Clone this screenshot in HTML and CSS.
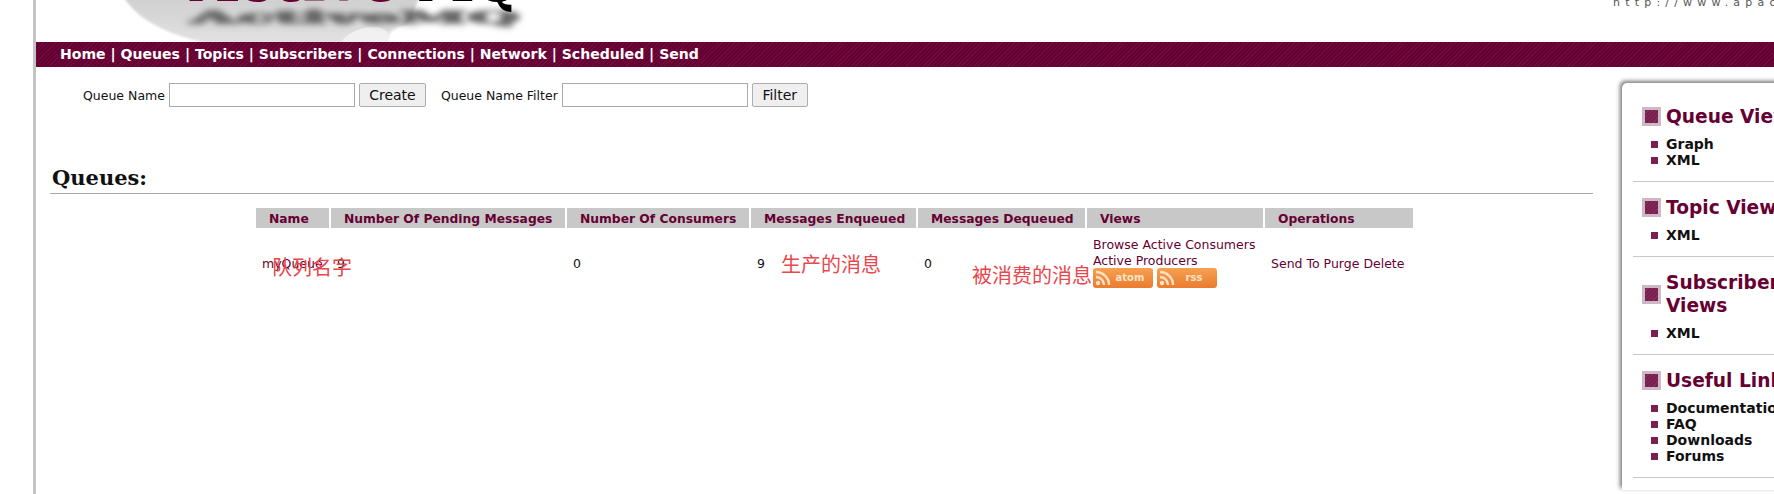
FILE: index.html
```html
<!DOCTYPE html>
<html lang="en">
<head>
    <meta charset="UTF-8">
    <title>localhost : Queues</title>
    <link rel="stylesheet" href="styles.css">
</head>
<body>
    <div class="page">
        <header class="banner">
            <svg class="logo" width="520" height="42" viewBox="0 0 520 42">
                <defs>
                    <filter id="soft" x="-5%" y="-80%" width="110%" height="260%"><feGaussianBlur stdDeviation="3"/></filter>
                    <filter id="softer"><feGaussianBlur stdDeviation="0.8"/></filter>
                    <linearGradient id="swoosh" x1="0" y1="0" x2="0" y2="1">
                        <stop offset="0" stop-color="#cfcfcf"/>
                        <stop offset="1" stop-color="#e2e2e2"/>
                    </linearGradient>
                </defs>
                <path d="M87 -4 C 100 18 128 34 171 43 L 352 43 C 350 34 356 28 372 24 L 384 -4 Z" fill="url(#swoosh)" filter="url(#softer)"/>
                <path d="M306 42 C 308 34 326 26 340 27 C 354 29 356 38 350 42 Z" fill="#f1f1f1"/>
                <text class="logo-shadow" x="154" y="23" textLength="330" lengthAdjust="spacingAndGlyphs" filter="url(#soft)">ActiveMQ</text>
                <text class="logo-text" x="154" y="1" textLength="210" lengthAdjust="spacingAndGlyphs">Active</text>
                <text class="logo-text logo-dark" x="381" y="1" textLength="103" lengthAdjust="spacingAndGlyphs">MQ</text>
            </svg>
            <span class="site-url">http://www.apache.org/</span>
        </header>

        <nav class="topnav">
            <a href="#">Home</a> | <a href="#">Queues</a> | <a href="#">Topics</a> | <a href="#">Subscribers</a> | <a href="#">Connections</a> | <a href="#">Network</a> | <a href="#">Scheduled</a> | <a href="#">Send</a>
        </nav>

        <div class="columns">
            <main class="content">
                <form class="queue-form">
                    <label for="queueName">Queue Name</label>
                    <input type="text" id="queueName">
                    <button type="button" class="btn btn-create">Create</button>
                    <label for="queueFilter" class="filter-label">Queue Name Filter</label>
                    <input type="text" id="queueFilter">
                    <button type="button" class="btn btn-filter">Filter</button>
                </form>

                <h2 class="section-heading">Queues:</h2>

                <table class="queues">
                    <thead>
                        <tr>
                            <th class="col-name">Name</th>
                            <th class="col-pending">Number Of Pending Messages</th>
                            <th class="col-consumers">Number Of Consumers</th>
                            <th class="col-enqueued">Messages Enqueued</th>
                            <th class="col-dequeued">Messages Dequeued</th>
                            <th class="col-views">Views</th>
                            <th class="col-ops">Operations</th>
                        </tr>
                    </thead>
                    <tbody>
                        <tr>
                            <td><a href="#">myQueue</a></td>
                            <td>9</td>
                            <td>0</td>
                            <td>9</td>
                            <td>0</td>
                            <td class="views-cell">
                                <a href="#">Browse</a> <a href="#">Active Consumers</a><br>
                                <a href="#">Active Producers</a><br>
                                <span class="feeds">
                                    <a href="#" class="feed">
                                        <svg width="16" height="16" viewBox="0 0 16 16"><circle cx="3" cy="13" r="2.2" fill="#fde3c4"/><path d="M1 7 A8 8 0 0 1 9 15 M1 2 A13 13 0 0 1 14 15" fill="none" stroke="#fde3c4" stroke-width="2.4"/></svg>
                                        <span class="feed-label">atom</span>
                                    </a>
                                    <a href="#" class="feed">
                                        <svg width="16" height="16" viewBox="0 0 16 16"><circle cx="3" cy="13" r="2.2" fill="#fde3c4"/><path d="M1 7 A8 8 0 0 1 9 15 M1 2 A13 13 0 0 1 14 15" fill="none" stroke="#fde3c4" stroke-width="2.4"/></svg>
                                        <span class="feed-label">rss</span>
                                    </a>
                                </span>
                            </td>
                            <td><a href="#">Send To</a> <a href="#">Purge</a> <a href="#">Delete</a></td>
                        </tr>
                    </tbody>
                </table>
            </main>

            <aside class="sidebar">
                <section class="side-group">
                    <h3><span class="side-icon"></span><span>Queue Views</span></h3>
                    <ul>
                        <li><a href="#">Graph</a></li>
                        <li><a href="#">XML</a></li>
                    </ul>
                </section>
                <section class="side-group">
                    <h3><span class="side-icon"></span><span>Topic Views</span></h3>
                    <ul>
                        <li><a href="#">XML</a></li>
                    </ul>
                </section>
                <section class="side-group">
                    <h3><span class="side-icon"></span><span>Subscribers Views</span></h3>
                    <ul>
                        <li><a href="#">XML</a></li>
                    </ul>
                </section>
                <section class="side-group">
                    <h3><span class="side-icon"></span><span>Useful Links</span></h3>
                    <ul>
                        <li><a href="#">Documentation</a></li>
                        <li><a href="#">FAQ</a></li>
                        <li><a href="#">Downloads</a></li>
                        <li><a href="#">Forums</a></li>
                    </ul>
                </section>
            </aside>
        </div>

        <span class="note note-name">队列名字</span>
        <span class="note note-enqueued">生产的消息</span>
        <span class="note note-dequeued">被消费的消息</span>
    </div>
</body>
</html>
```

FILE: styles.css
```css
* {
    margin: 0;
    padding: 0;
    box-sizing: border-box;
}

html, body {
    height: 100%;
    overflow: hidden;
}

body {
    font-family: "DejaVu Sans", Verdana, sans-serif;
    font-size: 12.5px;
    background: white;
    color: #111;
}

a {
    color: #660033;
    text-decoration: none;
}

.page {
    position: relative;
    height: 494px;
    margin-left: 33px;
    border-left: 3px solid #c4c4c4;
}

/* banner */
.banner {
    position: relative;
    height: 42px;
    overflow: hidden;
}

.logo {
    display: block;
}

.logo-shadow {
    font-family: "DejaVu Serif", serif;
    font-size: 16px;
    font-weight: 700;
    fill: #666;
    stroke: #666;
    stroke-width: 1.5px;
}

.logo-text {
    font-family: "DejaVu Serif", serif;
    font-size: 60px;
    font-weight: 700;
    fill: #660033;
}

.logo-dark {
    fill: #000;
}

.site-url {
    position: absolute;
    top: -4px;
    left: 1577px;
    font-size: 11px;
    letter-spacing: 5.2px;
    color: #555;
    white-space: nowrap;
}

.topnav {
    height: 25px;
    padding-left: 24px;
    line-height: 25px;
    font-size: 14.07px;
    font-weight: 700;
    color: white;
    background: repeating-linear-gradient(135deg, #660033 0, #660033 2px, #6f0c3d 2px, #6f0c3d 3px);
}

.topnav a {
    color: white;
}

.columns {
    display: flex;
    align-items: flex-start;
}

.content {
    flex: 0 0 1557px;
    padding: 16px 0 0 14px;
}

/* queue form */
.queue-form {
    display: flex;
    align-items: center;
    gap: 4px;
    height: 24px;
    padding-left: 33px;
}

.queue-form label {
    padding-top: 1px;
}

.queue-form input {
    width: 186px;
    height: 24px;
    border: 1px solid #a9a9a9;
}

.btn {
    height: 24px;
    font-family: inherit;
    font-size: 14px;
    color: #111;
    background: #efefef;
    border: 1px solid #adadad;
    border-radius: 2px;
}

.btn-create {
    width: 67px;
}

.btn-filter {
    width: 56px;
}

.filter-label {
    margin-left: 11px;
}

.section-heading {
    margin-top: 59px;
    padding: 0 0 3px 2px;
    font-family: "DejaVu Serif", serif;
    font-size: 21px;
    font-weight: 700;
    line-height: 24px;
    color: #111;
    border-bottom: 1px solid #a8a8a8;
}

/* queues table */
.queues {
    margin: 14px 0 0 204px;
    border-collapse: separate;
    border-spacing: 2px 0;
    table-layout: fixed;
    width: 1161px;
}

.queues th {
    height: 20px;
    padding: 1px 0 0 13px;
    text-align: left;
    font-size: 12.3px;
    color: #660033;
    background: #c8c8c8;
    white-space: nowrap;
}

.col-name { width: 73px; }
.col-pending { width: 234px; }
.col-consumers { width: 182px; }
.col-enqueued { width: 165px; }
.col-dequeued { width: 167px; }
.col-views { width: 176px; }
.col-ops { width: 148px; }

.queues td {
    padding-left: 6px;
    line-height: 16px;
    vertical-align: middle;
}

.queues .views-cell {
    padding: 9px 0 11px 6px;
    white-space: nowrap;
}

.feeds {
    display: flex;
    gap: 4px;
    margin-top: -1px;
}

.feed {
    display: flex;
    align-items: center;
    width: 60px;
    height: 20px;
    padding-left: 2px;
    color: #fde3c4;
    background: linear-gradient(#f7a050, #e97c30);
    border-radius: 3px;
}

.feed-label {
    flex: 1;
    padding-right: 4px;
    text-align: center;
    font-size: 10px;
    font-weight: 700;
    line-height: 20px;
}

/* sidebar */
.sidebar {
    flex: 0 0 180px;
    height: 407px;
    margin: 16px 0 0 29px;
    padding: 8px 0 0 11px;
    background: white;
    border-radius: 5px 0 0 0;
    box-shadow: -2px -2px 4px #777;
}

.side-group {
    width: 190px;
    margin-right: -60px;
    padding: 14px 0 13px 9px;
    border-bottom: 1px solid #c8c8c8;
}

.side-group h3 {
    display: flex;
    align-items: center;
    gap: 5px;
    font-size: 18.6px;
    line-height: 23px;
    font-weight: 700;
    color: #660033;
}

.side-group h3 span:last-child {
    flex: 0 0 165px;
}

.side-icon {
    flex: 0 0 19px;
    height: 19px;
    background: repeating-linear-gradient(135deg, #7a1f4f 0, #7a1f4f 2px, #84305c 2px, #84305c 3px);
    border: 3px solid #cdb9c4;
}

.side-group ul {
    list-style: none;
    margin-top: 8px;
}

.side-group li {
    display: flex;
    align-items: center;
    gap: 8px;
    padding-left: 9px;
    font-size: 14px;
    font-weight: 700;
    line-height: 16px;
    white-space: nowrap;
}

.side-group li::before {
    content: "";
    flex: 0 0 7px;
    height: 7px;
    background: #7a1f4f;
}

.side-group li a {
    color: #111;
}

/* red notes pasted over the screenshot */
.note {
    position: absolute;
    font-family: "Noto Sans CJK SC", sans-serif;
    font-size: 20px;
    line-height: 24px;
    color: #e8474c;
    white-space: nowrap;
}

.note-name {
    top: 255px;
    left: 236px;
}

.note-enqueued {
    top: 252px;
    left: 745px;
}

.note-dequeued {
    top: 263px;
    left: 936px;
}
```
